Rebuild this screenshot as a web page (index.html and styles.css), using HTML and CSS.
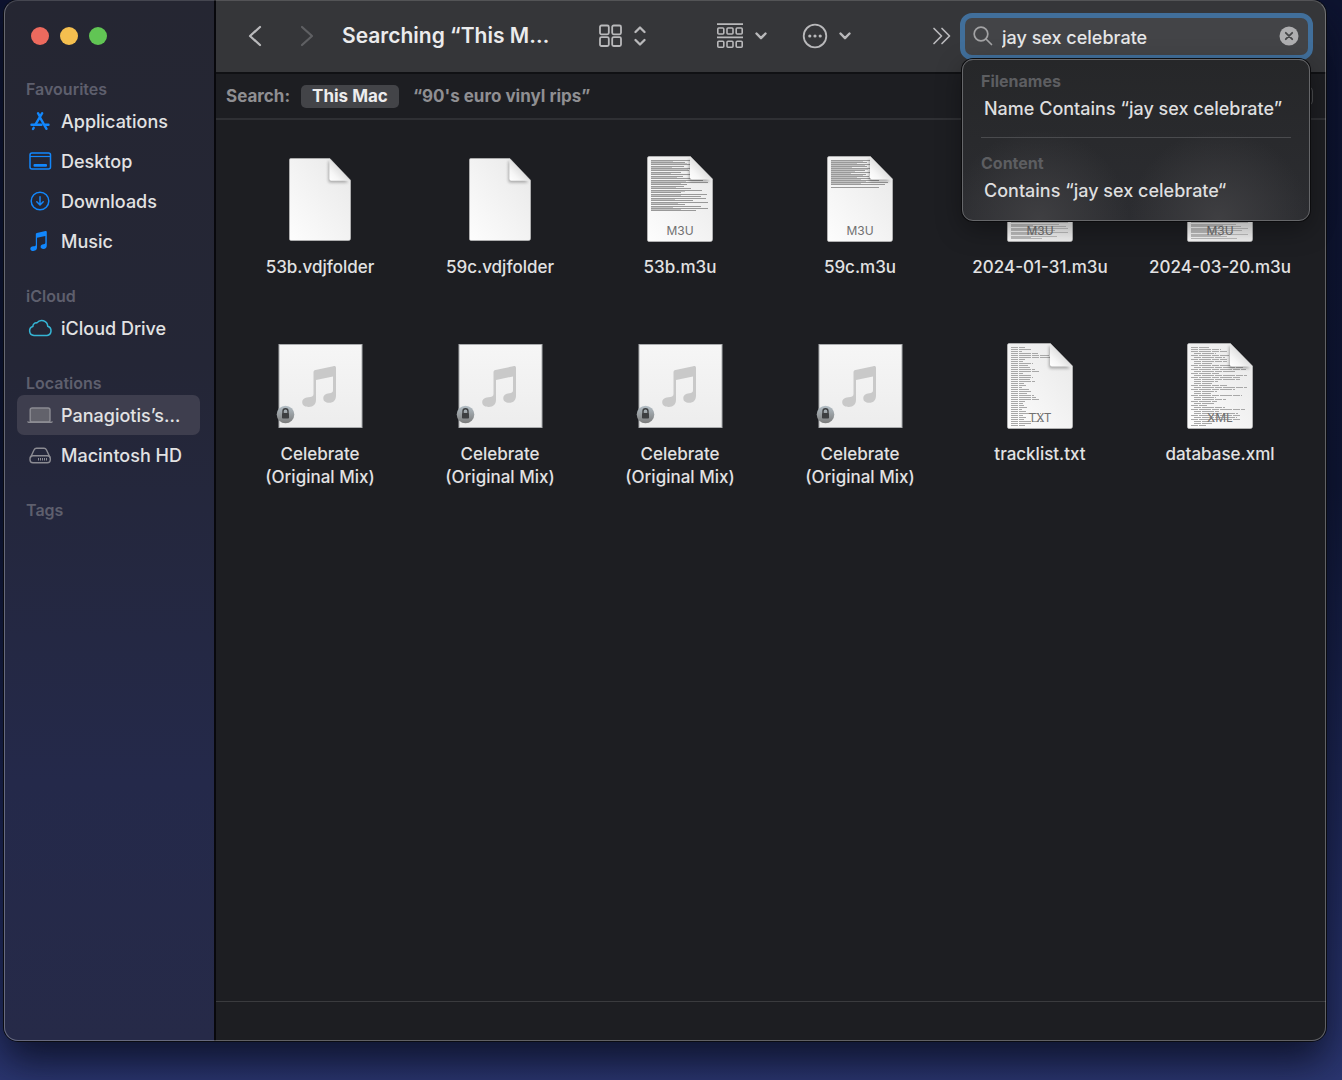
FILE: index.html
```html
<!DOCTYPE html>
<html lang="en-GB">
<head>
<meta charset="utf-8">
<meta name="viewport" content="width=device-width, initial-scale=1">
<title>Searching “This Mac”</title>
<link rel="stylesheet" href="styles.css">
</head>
<body>
<svg class="defs" aria-hidden="true">
  <defs>
    <linearGradient id="paper" x1="1" y1="0" x2="0" y2="1"><stop offset="0" stop-color="#e8e8e8"/><stop offset="1" stop-color="#fdfdfd"/></linearGradient>
    <linearGradient id="fold" x1="1" y1="0" x2="0" y2="1"><stop offset=".45" stop-color="#dedede"/><stop offset=".75" stop-color="#f6f6f6"/><stop offset="1" stop-color="#fff"/></linearGradient>
    <linearGradient id="tile" x1="0" y1="0" x2="0" y2="1"><stop offset="0" stop-color="#f6f6f6"/><stop offset="1" stop-color="#ededed"/></linearGradient>
    <linearGradient id="badge" x1="0" y1="0" x2="0" y2="1"><stop offset="0" stop-color="#b4bfc6"/><stop offset="1" stop-color="#7c7c7c"/></linearGradient>
    <filter id="soft" x="-50%" y="-50%" width="200%" height="200%"><feGaussianBlur stdDeviation="1.6"/></filter>
    <clipPath id="sheet-clip"><path d="M0 0h43l23 23v63H0z"/></clipPath>
    <symbol id="sheet" viewBox="0 0 66 86">
      <path d="M2 .5h41.500L65.500 23v60.500a2 2 0 0 1-2 2H2a1.500 1.500 0 0 1-1.500-1.500V2A1.500 1.500 0 0 1 2 .5z" fill="url(#paper)" stroke="#c9c9c9" stroke-width=".6"/>
    </symbol>
    <symbol id="corner" viewBox="0 0 66 86">
      <g clip-path="url(#sheet-clip)"><path d="M42 3v20.500a2 2 0 0 0 2 2H63L43 3z" fill="#000" opacity=".3" filter="url(#soft)"/></g>
      <path d="M43 .8v20.700a2 2 0 0 0 2 2h20.300z" fill="url(#fold)"/>
    </symbol>
    <symbol id="note" viewBox="0 0 34 41">
      <path d="M11.500 6.500c0-1.500.5-2.200 2-2.600L31.300.2c1.600-.4 2.700.2 2.700 1.800v27.500c0 4.500-2.300 7.300-7 7.300-3.400 0-5.700-1.700-5.700-4.500 0-3 2.400-4.600 6-5 2.700-.4 3.700-1 3.700-3V10.500L14 14v19.500c0 4.800-2.600 7.400-7.300 7.400C2.800 40.900.2 39.200.2 36.200c0-3 2.500-4.500 6-4.900 3.500-.4 5.300-.8 5.300-3.300z" fill="currentColor"/>
    </symbol>
    <symbol id="audio" viewBox="0 0 96 88">
      <rect x="7" y="2.500" width="83" height="83" fill="url(#tile)" stroke="#a9abad" stroke-width="1"/>
      <use href="#note" x="30" y="24" width="34" height="41" color="#c9c9c9"/>
      <circle cx="13.500" cy="72.500" r="8.800" fill="url(#badge)"/>
      <path d="M11 71.500v-2.200a2.500 2.500 0 0 1 5 0v2.200" fill="none" stroke="#3d3f41" stroke-width="1.400"/>
      <rect x="10" y="71" width="7" height="5.500" rx=".8" fill="#3d3f41"/>
    </symbol>
    <symbol id="chevron" viewBox="0 0 12 8"><path d="M1.500 1.500 6 6.200l4.500-4.700" fill="none" stroke="currentColor" stroke-width="2.400" stroke-linecap="round" stroke-linejoin="round"/></symbol>
  </defs>
</svg>

<div class="window">
  <nav class="sidebar" aria-label="Sidebar">
    <div class="lights">
      <button class="light red" aria-label="Close"></button>
      <button class="light amber" aria-label="Minimise"></button>
      <button class="light green" aria-label="Zoom"></button>
    </div>
    <section class="group">
      <h2>Favourites</h2>
      <a href="#" class="place"><svg class="blue" width="26" height="22" viewBox="0 0 26 22"><g fill="none" stroke="currentColor" stroke-width="2.400" stroke-linecap="round"><path d="m11 3.200 1.500 2.600M15.200 3.200 8.400 14.600M13.200 7.800l6.300 11"/><path d="M4.500 14.800h10M18.500 14.800h3M6.700 17.800l-.7 1.200"/></g></svg>Applications</a>
      <a href="#" class="place"><svg class="blue" width="26" height="22" viewBox="0 0 26 22"><rect x="3" y="3" width="20.500" height="16" rx="2" fill="none" stroke="currentColor" stroke-width="1.500"/><path d="M3 6.500h20" stroke="currentColor" stroke-width="1.200"/><rect x="6.500" y="14" width="13.500" height="2.800" rx="1" fill="currentColor"/></svg>Desktop</a>
      <a href="#" class="place"><svg class="blue" width="26" height="22" viewBox="0 0 26 22"><g fill="none" stroke="currentColor" stroke-width="1.500" stroke-linecap="round" stroke-linejoin="round"><circle cx="13" cy="11" r="8.800"/><path d="M13 6.800v8M9.800 11.800l3.200 3.200 3.200-3.200"/></g></svg>Downloads</a>
      <a href="#" class="place"><svg class="blue" width="26" height="22" viewBox="0 0 26 22"><use href="#note" x="3" y="1" width="17" height="20"/></svg>Music</a>
    </section>
    <section class="group">
      <h2>iCloud</h2>
      <a href="#" class="place"><svg class="cyan" width="26" height="22" viewBox="0 0 26 22"><path d="M7 18.500a4.600 4.600 0 0 1-1.100-9 3.400 3.400 0 0 1 4-3.600 6 6 0 0 1 10.800 3.300 4.800 4.800 0 0 1-.7 9.300z" fill="none" stroke="currentColor" stroke-width="1.500" stroke-linejoin="round"/></svg>iCloud Drive</a>
    </section>
    <section class="group">
      <h2>Locations</h2>
      <a href="#" class="place selected" aria-current="page"><svg class="grey" width="26" height="22" viewBox="0 0 26 22"><rect x="3.200" y="4" width="19.800" height="14" rx="2" fill="#62626b" stroke="currentColor" stroke-width="1.400"/><path d="M0 17.500h26v.5l-1.500 1H1.500L0 18z" fill="currentColor"/></svg>Panagiotis’s…</a>
      <a href="#" class="place"><svg class="grey" width="26" height="22" viewBox="0 0 26 22"><g fill="none" stroke="currentColor" stroke-width="1.400" stroke-linejoin="round"><path d="M3.500 13.500 7 6c.6-1.300 1.200-1.800 2.500-1.800h7.500c1.300 0 1.900.5 2.500 1.800l3.500 7.500"/><rect x="3" y="11.700" width="20.300" height="7" rx="3"/><path d="M11 15.200h10" stroke-width="2.600" stroke-dasharray="1 1"/></g></svg>Macintosh HD</a>
    </section>
    <section class="group">
      <h2>Tags</h2>
    </section>
  </nav>

  <main class="pane">
    <header class="toolbar">
      <div class="history">
        <button aria-label="Back"><svg width="14" height="22" viewBox="0 0 14 22"><path d="M12 2 2 11l10 9" fill="none" stroke="#bababc" stroke-width="2.200" stroke-linecap="round" stroke-linejoin="round"/></svg></button>
        <button aria-label="Forward" disabled><svg width="14" height="22" viewBox="0 0 14 22"><path d="m2 2 10 9-10 9" fill="none" stroke="#5f6063" stroke-width="2.200" stroke-linecap="round" stroke-linejoin="round"/></svg></button>
      </div>
      <h1>Searching “This M…</h1>
      <button class="tool view" aria-label="View"><svg width="24" height="24" viewBox="0 0 24 24"><g fill="none" stroke="currentColor" stroke-width="1.800"><rect x="1" y="1.500" width="8.800" height="8.800" rx="1.500"/><rect x="13.200" y="1.500" width="8.800" height="8.800" rx="1.500"/><rect x="1" y="13.200" width="8.800" height="8.800" rx="1.500"/><rect x="13.200" y="13.200" width="8.800" height="8.800" rx="1.500"/></g></svg><svg width="12" height="20" viewBox="0 0 12 20"><g fill="none" stroke="currentColor" stroke-width="2.300" stroke-linecap="round" stroke-linejoin="round"><path d="M1.500 6 6 1.500 10.500 6M1.500 14 6 18.500l4.500-4.500"/></g></svg></button>
      <button class="tool arrange" aria-label="Group"><svg width="28" height="26" viewBox="0 0 28 26"><path d="M1 1.200h26M1 14.300h26" stroke="currentColor" stroke-width="1.700"/><g fill="none" stroke="currentColor" stroke-width="1.600"><rect x="1.800" y="5" width="6" height="6" rx="1"/><rect x="11" y="5" width="6" height="6" rx="1"/><rect x="20.200" y="5" width="6" height="6" rx="1"/><rect x="1.800" y="18.300" width="6" height="6" rx="1"/><rect x="11" y="18.300" width="6" height="6" rx="1"/><rect x="20.200" y="18.300" width="6" height="6" rx="1"/></g></svg><svg width="12" height="8"><use href="#chevron"/></svg></button>
      <button class="tool" aria-label="Actions"><svg width="26" height="26" viewBox="0 0 26 26"><circle cx="13" cy="13" r="11.300" fill="none" stroke="currentColor" stroke-width="1.800"/><g fill="currentColor"><circle cx="7.800" cy="13" r="1.600"/><circle cx="13" cy="13" r="1.600"/><circle cx="18.200" cy="13" r="1.600"/></g></svg><svg width="12" height="8"><use href="#chevron"/></svg></button>
      <button class="tool more" aria-label="More"><svg width="19" height="18" viewBox="0 0 19 18"><path d="m2 1.500 7.500 7.500L2 16.500M10 1.500 17.500 9 10 16.500" fill="none" stroke="currentColor" stroke-width="1.700" stroke-linecap="round" stroke-linejoin="round"/></svg></button>
      <div class="search">
        <label class="field">
          <svg width="20" height="20" viewBox="0 0 20 20" role="img" aria-label="Search"><g fill="none" stroke="#a3a3a5" stroke-width="1.700" stroke-linecap="round"><circle cx="8" cy="8" r="6.800"/><path d="m13 13 5.500 5.500"/></g></svg>
          <input type="text" value="jay sex celebrate">
          <button class="clear" aria-label="Clear"><svg width="20" height="20" viewBox="0 0 20 20"><circle cx="10" cy="10" r="9.500" fill="#aeaeb0"/><path d="m6.800 6.800 6.400 6.400m0-6.400-6.400 6.400" stroke="#454648" stroke-width="1.800" stroke-linecap="round"/></svg></button>
        </label>
        <div class="suggestions">
          <h3>Filenames</h3>
          <a href="#">Name Contains “jay sex celebrate”</a>
          <hr>
          <h3>Content</h3>
          <a href="#">Contains “jay sex celebrate“</a>
        </div>
      </div>
    </header>

    <div class="scope">
      <span>Search:</span>
      <button class="on">This Mac</button>
      <button>“90's euro vinyl rips”</button>
      <button class="save" aria-label="Save"></button>
    </div>

    <ul class="files">
      <li><div class="icon"><svg width="62" height="83" viewBox="0 0 66 86" preserveAspectRatio="none"><use href="#sheet"/><use href="#corner"/></svg></div>53b.vdjfolder</li>
      <li><div class="icon"><svg width="62" height="83" viewBox="0 0 66 86" preserveAspectRatio="none"><use href="#sheet"/><use href="#corner"/></svg></div>59c.vdjfolder</li>
      <li><div class="icon"><svg width="66" height="86" viewBox="0 0 66 86"><use href="#sheet"/><path class="print" d="M4 4h40M4 6h34M4 8h40M4 10h33M4 12h40M4 14h38M4 16h30M4 18h40M4 20h32M4 22h41M4 24h52M4 26h57M4 28h36M4 30h33M4 32h40M4 34h51M4 36h30M4 38h56M4 40h50M4 42h55M4 44h42M4 46h57M4 48h34M4 50h50M4 52h57M4 54h45"/><path class="print faint" d="M4 5h22M4 7h36M4 11h21M4 13h37M4 17h20M4 21h26M4 25h35M4 27h30M4 31h25M4 35h34M4 39h30M4 43h24M4 47h27M4 51h22M4 53h30"/><use href="#corner"/><text x="33" y="79">M3U</text></svg></div>53b.m3u</li>
      <li><div class="icon"><svg width="66" height="86" viewBox="0 0 66 86"><use href="#sheet"/><path class="print" d="M4 4h40M4 6h36M4 8h40M4 10h36M4 12h40M4 14h34M4 16h40M4 18h35M4 20h38M4 22h42M4 24h48M4 26h57M4 28h54M4 31h48"/><path class="print faint" d="M4 5h32M4 7h26M4 9h34M4 11h21M4 13h37M4 15h24M4 17h20M4 19h32M4 21h26M4 23h30M4 25h35M4 27h30"/><use href="#corner"/><text x="33" y="79">M3U</text></svg></div>59c.m3u</li>
      <li><div class="icon"><svg width="66" height="86" viewBox="0 0 66 86"><use href="#sheet"/><path class="print faint" d="M4 60h50M4 62h55M4 64h42M4 66h57M4 68h48M4 70h55M4 72h57M4 74h44M4 76h57M4 78h38M4 80h46M4 82h31M4 69h22M4 73h30M4 77h24M4 81h20"/><use href="#corner"/><text x="33" y="79">M3U</text></svg></div>2024-01-31.m3u</li>
      <li><div class="icon"><svg width="66" height="86" viewBox="0 0 66 86"><use href="#sheet"/><path class="print faint" d="M4 60h57M4 62h52M4 64h44M4 66h57M4 68h45M4 70h50M4 72h57M4 74h51M4 76h42M4 78h57M4 80h36M4 82h46M4 69h32M4 73h20M4 75h26M4 79h30"/><use href="#corner"/><text x="33" y="79">M3U</text></svg></div>2024-03-20.m3u</li>
      <li><div class="icon"><svg width="96" height="88"><use href="#audio"/></svg></div>Celebrate<br>(Original Mix)</li>
      <li><div class="icon"><svg width="96" height="88"><use href="#audio"/></svg></div>Celebrate<br>(Original Mix)</li>
      <li><div class="icon"><svg width="96" height="88"><use href="#audio"/></svg></div>Celebrate<br>(Original Mix)</li>
      <li><div class="icon"><svg width="96" height="88"><use href="#audio"/></svg></div>Celebrate<br>(Original Mix)</li>
      <li><div class="icon"><svg width="66" height="86" viewBox="0 0 66 86"><use href="#sheet"/><path class="print thin" d="M4 4h14M4 6h20M4 8h11M4 10h27M4 12h38M4 14h40M4 16h14M4 18h12M4 20h22M4 22h17M4 24h19M4 26h24M4 28h29M4 30h12M4 32h20M4 34h22M4 36h19M4 38h24M4 40h13M4 42h15M4 44h11M4 46h18M4 48h20M4 50h16M4 52h23M4 54h25M4 56h28M4 58h14M4 60h12M4 62h13M4 64h16M4 66h11M4 68h15M4 70h30M4 72h12M4 74h15M4 76h13M4 78h32M4 80h20M4 82h14"/><use href="#corner"/><text x="33" y="79">TXT</text></svg></div>tracklist.txt</li>
      <li><div class="icon"><svg width="66" height="86" viewBox="0 0 66 86"><use href="#sheet"/><path class="print thin" d="M4 4h18M4 6h30M4 8h36M7 10h22M4 12h38M7 14h31M4 16h36M7 18h33M7 20h18M4 22h39M7 24h50M4 26h55M7 28h41M4 30h28M7 32h53M4 34h50M7 36h46M7 38h24M7 40h18M4 42h36M7 44h53M4 46h44M7 48h23M7 50h17M4 52h51M7 54h22M7 56h32M4 58h26M7 60h20M4 62h16M7 64h31M4 66h54M7 68h25M7 70h44M4 72h49M7 74h43M4 76h50M7 78h21M7 80h18M4 82h15"/><use href="#corner"/><text x="33" y="79">XML</text></svg></div>database.xml</li>
    </ul>
    <footer class="status"></footer>
  </main>
</div>
</body>
</html>
```
FILE: styles.css
```css
* { box-sizing: border-box; }

body {
  margin: 0;
  min-height: 100vh;
  display: flex;
  padding: 0 16px 39px 4px;
  overflow: hidden;
  font: 500 18px/23px Inter, "Liberation Sans", sans-serif;
  color: #e2e2e3;
  background: linear-gradient(#0e1430, #0f1634 45%, #232d62 85%, #2b3670);
}

h1, h2, h3, ul { margin: 0; padding: 0; }
a { color: inherit; text-decoration: none; }
svg { display: block; flex: none; }
button { font: inherit; color: inherit; background: none; border: 0; padding: 0; }
.defs { position: absolute; width: 0; height: 0; }

.window {
  flex: 1;
  display: flex;
  min-width: 0;
  border-radius: 14px;
  position: relative;
  box-shadow: 0 0 0 1px #0b0c12, 0 20px 40px #080b1ccc;
}
/* hairline drawn over the window edge */
.window::after {
  content: "";
  position: absolute;
  inset: 0;
  border: 1px solid #ffffff4d;
  border-top-color: #ffffff26;
  border-radius: inherit;
  pointer-events: none;
}

.sidebar {
  width: 212px;
  flex: none;
  padding: 0 12px 0 13px;
  border-right: 2px solid #08080c;
  border-radius: 14px 0 0 14px;
  background: linear-gradient(#252632, #242636 35%, #24294a 75%, #262a48);
}
.lights { display: flex; gap: 11px; padding: 27px 14px 32px; }
.light { width: 18px; height: 18px; border-radius: 50%; }
.red { background: #ed6a5e; }
.amber { background: #f5bf4f; }
.green { background: #61c554; }

.group { margin-bottom: 23px; }
.group h2 {
  padding-left: 9px;
  font-size: 16px;
  line-height: 24px;
  font-weight: 600;
  color: #5e5f6d;
}
.place {
  display: flex;
  align-items: center;
  gap: 8px;
  height: 40px;
  padding-left: 10px;
  border-radius: 7px;
  white-space: nowrap;
}
.selected { background: #3e3e4e; margin-right: 2px; }
.blue { color: #1287fc; }
.cyan { color: #35b5d5; }
.grey { color: #8b8b92; }

.pane {
  flex: 1;
  min-width: 0;
  display: flex;
  flex-direction: column;
  background: #1d1e22;
  border-radius: 0 14px 14px 0;
}
.toolbar {
  display: flex;
  align-items: center;
  height: 74px;
  padding: 0 13px 0 32px;
  background: #353639;
  border-bottom: 2px solid #101114;
  border-top-right-radius: 14px;
  color: #b9b9bb;
}
.history { display: flex; gap: 38px; }
h1 { width: 257px; margin-left: 28px; font-size: 21px; line-height: 28px; font-weight: 600; color: #ebebec; white-space: nowrap; }
.tool { display: flex; align-items: center; gap: 11px; margin-right: 35px; }
.tool.view { margin-right: 70px; }
.tool.more { margin: 0 9px 0 auto; }

.search { position: relative; width: 353px; }
.field {
  display: flex;
  align-items: center;
  height: 47px;
  padding: 0 9px 0 8px;
  border: 5px solid #416f9b;
  border-radius: 12px;
  background: #434447;
}
.field input {
  flex: 1;
  min-width: 0;
  padding: 2px 0 0;
  margin: 0 9px;
  border: 0;
  outline: 0;
  background: none;
  font: inherit;
  color: #e6e6e7;
}
.suggestions {
  position: absolute;
  z-index: 1;
  top: 46px;
  left: 2px;
  right: 3px;
  height: 162px;
  padding: 9px 18px;
  border: 1px solid #66676a;
  border-radius: 11px;
  background:
    radial-gradient(90px 90px at 22% 100%, #3f3f42, transparent),
    radial-gradient(90px 90px at 74% 100%, #3f3f42, transparent),
    linear-gradient(#262729, #2c2d31);
  box-shadow: 0 0 0 1px #0c0c0e, 0 8px 26px #00000059;
  color: #dededf;
}
.suggestions h3 { font-size: 16px; line-height: 24px; font-weight: 700; color: #5d5e61; }
.suggestions a { display: block; padding: 4px 3px; white-space: nowrap; }
.suggestions hr { height: 1px; margin: 13px 0; border: 0; background: #4a4b4e; }

.scope {
  display: flex;
  align-items: center;
  height: 46px;
  padding: 0 13px 0 10px;
  border-bottom: 2px solid #2f3034;
  font-size: 17px;
  font-weight: 700;
  color: #8f8f92;
}
.scope .on {
  height: 23px;
  padding: 0 11px;
  margin: 0 14px 0 11px;
  border-radius: 5px;
  background: #434448;
  color: #ededee;
}
.scope .save { width: 56px; height: 18px; margin-left: auto; border: 1px solid #4a4b4e; border-radius: 4px; }

.files {
  flex: 1;
  display: grid;
  grid-template-columns: repeat(auto-fill, 180px);
  grid-auto-rows: 187px;
  padding: 35px 0 0 14px;
  list-style: none;
  text-align: center;
  font-size: 17px;
}
.icon { display: flex; align-items: center; justify-content: center; height: 88px; margin-bottom: 13px; }
.icon text { font-size: 12px; font-weight: 400; text-anchor: middle; fill: #707070; }
.print { fill: none; stroke: #999; stroke-width: 1; shape-rendering: crispEdges; }
.faint { stroke: #c2c2c2; }
.thin { stroke: #a8a8a8; stroke-dasharray: 7 1 12 1; }

.status { height: 40px; border-top: 1px solid #3a3b3e; }
```
